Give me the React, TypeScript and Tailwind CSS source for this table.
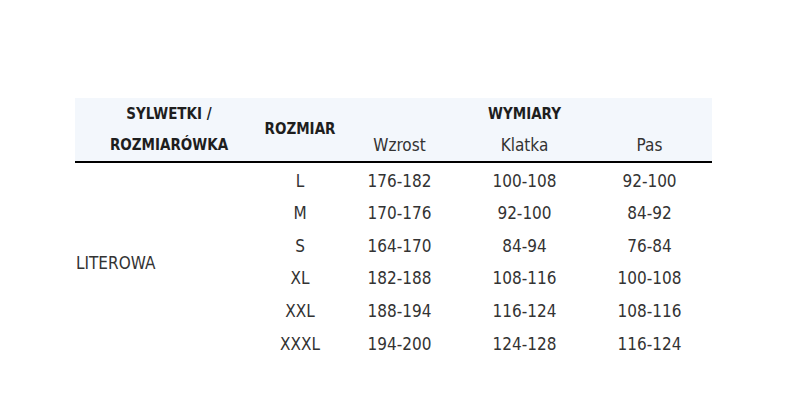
export default function App() {
  const rows = [
    ["L", "176-182", "100-108", "92-100"],
    ["M", "170-176", "92-100", "84-92"],
    ["S", "164-170", "84-94", "76-84"],
    ["XL", "182-188", "108-116", "100-108"],
    ["XXL", "188-194", "116-124", "108-116"],
    ["XXXL", "194-200", "124-128", "116-124"],
  ];
  return (
    <div
      className="w-[793px] h-[418px] bg-white pt-[98px] pl-[75px]"
      style={{ fontFamily: '"DejaVu Sans Condensed", "DejaVu Sans", sans-serif' }}
    >
      <table className="w-[637px] table-fixed border-collapse text-[17px] text-[#333]">
        <colgroup>
          <col className="w-[188px]" />
          <col className="w-[74px]" />
          <col className="w-[125px]" />
          <col className="w-[125px]" />
          <col className="w-[125px]" />
        </colgroup>
        <thead className="bg-[#f3f7fc]">
          <tr className="h-[31px]">
            <th rowSpan={2} className="align-middle text-center font-bold text-[15px] leading-[31px] text-[#1e1e1e] pt-[1px]">
              SYLWETKI /<br />ROZMIARÓWKA
            </th>
            <th rowSpan={2} className="align-middle text-center font-bold text-[15px] text-[#1e1e1e]">
              ROZMIAR
            </th>
            <th colSpan={3} className="align-middle text-center font-bold text-[15px] text-[#1e1e1e] pt-[1px]">
              WYMIARY
            </th>
          </tr>
          <tr className="h-[32px] border-b-2 border-black">
            <th className="font-normal text-center align-middle pt-[2px]">Wzrost</th>
            <th className="font-normal text-center align-middle pt-[2px]">Klatka</th>
            <th className="font-normal text-center align-middle pt-[2px]">Pas</th>
          </tr>
        </thead>
        <tbody>
          {rows.map((r, i) => (
            <tr key={i} className="h-[32.6px]">
              {i === 0 && (
                <td rowSpan={6} className="align-middle text-left pl-[1px] pt-[6px]">
                  LITEROWA
                </td>
              )}
              {r.map((c, j) => (
                <td key={j} className="text-center align-middle pt-[6px] pb-0">
                  {c}
                </td>
              ))}
            </tr>
          ))}
        </tbody>
      </table>
    </div>
  );
}
